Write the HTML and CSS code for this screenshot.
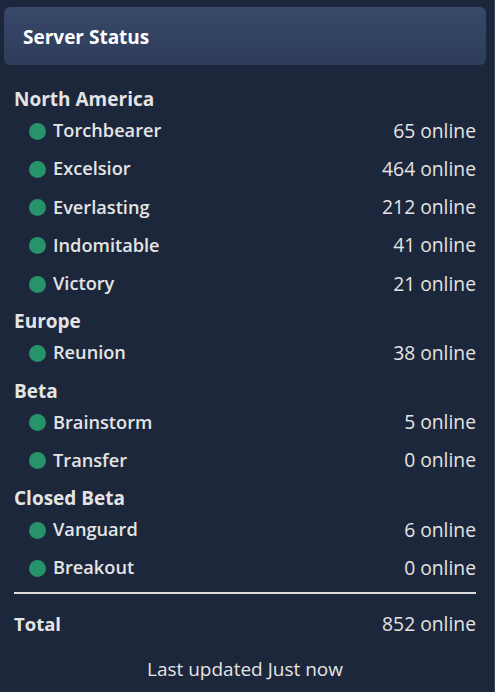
FILE: index.html
```html
<!DOCTYPE html>
<html lang="en">
<head>
    <meta charset="UTF-8">
    <meta name="viewport" content="width=device-width, initial-scale=1.0">
    <title>Server Status</title>
    <link rel="stylesheet" href="styles.css">
</head>
<body>
    <div class="status-panel">
        <div class="status-header">Server Status</div>
        <div class="status-list">
            <div class="region">
                <div class="region-name">North America</div>
                <div class="server-row"><span class="server-name"><span class="dot"></span>Torchbearer</span><span class="count">65 online</span></div>
                <div class="server-row"><span class="server-name"><span class="dot"></span>Excelsior</span><span class="count">464 online</span></div>
                <div class="server-row"><span class="server-name"><span class="dot"></span>Everlasting</span><span class="count">212 online</span></div>
                <div class="server-row"><span class="server-name"><span class="dot"></span>Indomitable</span><span class="count">41 online</span></div>
                <div class="server-row"><span class="server-name"><span class="dot"></span>Victory</span><span class="count">21 online</span></div>
            </div>
            <div class="region">
                <div class="region-name">Europe</div>
                <div class="server-row"><span class="server-name"><span class="dot"></span>Reunion</span><span class="count">38 online</span></div>
            </div>
            <div class="region">
                <div class="region-name">Beta</div>
                <div class="server-row"><span class="server-name"><span class="dot"></span>Brainstorm</span><span class="count">5 online</span></div>
                <div class="server-row"><span class="server-name"><span class="dot"></span>Transfer</span><span class="count">0 online</span></div>
            </div>
            <div class="region">
                <div class="region-name">Closed Beta</div>
                <div class="server-row"><span class="server-name"><span class="dot"></span>Vanguard</span><span class="count">6 online</span></div>
                <div class="server-row"><span class="server-name"><span class="dot"></span>Breakout</span><span class="count">0 online</span></div>
            </div>
            <div class="total-row">
                <span class="total-label">Total</span>
                <span class="count">852 online</span>
            </div>
        </div>
        <p class="last-updated">Last updated Just now</p>
    </div>
</body>
</html>
```

FILE: styles.css
```css
body {
    margin: 0;
    background: #1c273b;
    font-family: 'Open Sans', 'Noto Sans', sans-serif;
    color: #e4e4e4;
}
.status-panel {
    height: 692px;
    box-sizing: border-box;
    padding: 7px 8px 0 4px;
    border-right: 1px solid #3b465c;
}
.status-header {
    height: 58px;
    box-sizing: border-box;
    display: flex;
    align-items: center;
    padding: 2px 0 0 19px;
    border-radius: 6px;
    background: linear-gradient(180deg, #384869 0%, #2e3d5b 100%);
    color: #fff;
    font-size: 19px;
    font-weight: bold;
}
.status-list {
    padding: 0 10px;
    margin-top: 22px;
}
.region {
    margin-bottom: 7px;
}
.region-name {
    height: 24px;
    line-height: 24px;
    font-size: 19px;
    font-weight: bold;
}
.server-row {
    height: 38.25px;
    display: flex;
    align-items: center;
    justify-content: space-between;
    padding-left: 15px;
    font-size: 19.3px;
}
.server-name {
    display: flex;
    align-items: center;
    gap: 7px;
    font-size: 18.2px;
    font-weight: 600;
}
.dot {
    width: 17px;
    height: 17px;
    margin-top: 2px;
    border-radius: 50%;
    background: #27936a;
}
.total-row {
    border-top: 2px solid #dcdcdc;
    margin-top: -2px;
    padding-top: 11px;
    height: 38px;
    display: flex;
    align-items: center;
    justify-content: space-between;
    font-size: 19.3px;
}
.total-label {
    font-weight: bold;
    font-size: 18.5px;
}
.last-updated {
    text-align: center;
    font-size: 19px;
    margin: 13px 0 0 0;
}
```
